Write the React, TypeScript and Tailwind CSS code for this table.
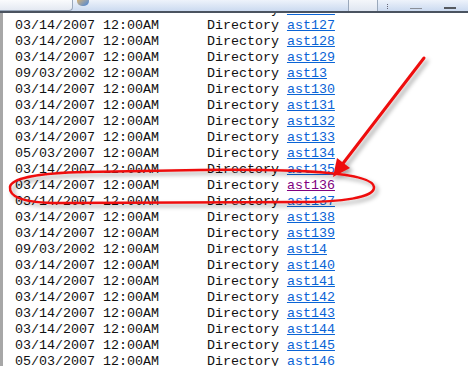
type Row = { date: string; name: string; visited?: boolean };

const rows: Row[] = [
  { date: "03/14/2007", name: "ast126" },
  { date: "03/14/2007", name: "ast127" },
  { date: "03/14/2007", name: "ast128" },
  { date: "03/14/2007", name: "ast129" },
  { date: "09/03/2002", name: "ast13" },
  { date: "03/14/2007", name: "ast130" },
  { date: "03/14/2007", name: "ast131" },
  { date: "03/14/2007", name: "ast132" },
  { date: "03/14/2007", name: "ast133" },
  { date: "05/03/2007", name: "ast134" },
  { date: "03/14/2007", name: "ast135" },
  { date: "03/14/2007", name: "ast136", visited: true },
  { date: "03/14/2007", name: "ast137" },
  { date: "03/14/2007", name: "ast138" },
  { date: "03/14/2007", name: "ast139" },
  { date: "09/03/2002", name: "ast14" },
  { date: "03/14/2007", name: "ast140" },
  { date: "03/14/2007", name: "ast141" },
  { date: "03/14/2007", name: "ast142" },
  { date: "03/14/2007", name: "ast143" },
  { date: "03/14/2007", name: "ast144" },
  { date: "03/14/2007", name: "ast145" },
  { date: "05/03/2007", name: "ast146" },
];

function TabStrip() {
  return (
    <div className="flex h-[13px] shrink-0 border-b-2 border-[#4a5360] bg-gradient-to-b from-[#eef3fb] to-[#cbdaf0]">
      <div className="w-[73px] rounded-br-sm border-r border-b border-[#9aa8bb] bg-gradient-to-b from-[#fafbfd] to-[#e4e9f2]" />
      <div className="relative flex w-[275px] items-start pl-[4px]">
        <div className="-mt-[4px] h-[10px] w-[12px] rounded-full bg-gradient-to-br from-[#f6b73c] to-[#3d7fd9]" />
      </div>
      <div className="w-[30px] border-x border-[#9aa8bb] bg-gradient-to-b from-[#f4f6fa] to-[#dfe6f1]" />
      <div className="flex flex-1 items-end gap-[22px] pl-[9px] pb-[2px]">
        <span className="h-[5px] w-[1px] border-l border-dotted border-[#667]" />
        <span className="h-[1px] w-[12px] bg-[#8a8f98]" />
        <span className="h-[2px] w-[12px] bg-[#55595f]" />
      </div>
    </div>
  );
}

function Annotation() {
  return (
    <svg className="pointer-events-none absolute inset-0" width="468" height="366" viewBox="0 0 468 366">
      <defs>
        <filter id="shadow" x="-10%" y="-10%" width="130%" height="140%">
          <feDropShadow dx="3" dy="3" stdDeviation="2" floodColor="#000" floodOpacity="0.35" />
        </filter>
      </defs>
      <g filter="url(#shadow)">
        <path
          d="M 200 170 C 300 169, 372 172, 374 187 C 375 198, 340 202, 300 202 L 60 203 C 20 203, 9 196, 10 187 C 11 178, 40 173, 85 172 L 200 170"
          fill="none"
          stroke="#ee1010"
          strokeWidth="2.5"
        />
        <line x1="424" y1="58" x2="341" y2="166" stroke="#ee1010" strokeWidth="3" strokeLinecap="round" />
        <polygon points="333,177 337,158 350,168" fill="#ee1010" />
      </g>
    </svg>
  );
}

export default function App() {
  return (
    <div className="relative flex h-[366px] w-[468px] flex-col overflow-hidden bg-white font-['Liberation_Mono',monospace] text-[13.33px] leading-4 text-[#111]">
      <TabStrip />
      <div className="flex-1 overflow-hidden border-l-[3px] border-[#a7a7a7]">
        <div className="-mt-[11px] pl-[12px]">
          {rows.map((r) => (
            <div key={r.name} className="h-4 whitespace-pre">
              {r.date} 12:00AM      Directory{" "}
              <a
                href="#"
                className={r.visited ? "text-[#800080] underline" : "text-[#0a64d6] underline"}
              >
                {r.name}
              </a>
            </div>
          ))}
        </div>
      </div>
      <Annotation />
    </div>
  );
}
